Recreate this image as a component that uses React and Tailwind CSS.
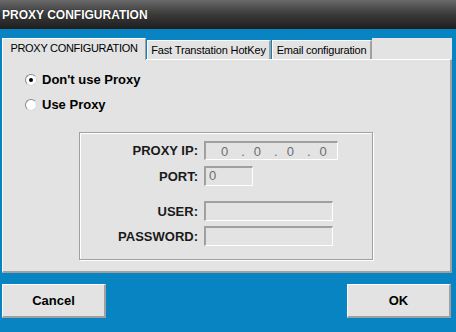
import React from "react";

function Radio({ checked, label }) {
    return (
        <div className="flex items-center h-[20px]">
            <div className="w-[12px] h-[12px] rounded-full bg-white border border-t-[#8a8a8a] border-l-[#8a8a8a] border-b-[#d8d8d8] border-r-[#d8d8d8] flex items-center justify-center">
                {checked && <div className="w-[4px] h-[4px] rounded-full bg-black" />}
            </div>
            <span className="ml-[5px] text-[13px] font-bold text-black">{label}</span>
        </div>
    );
}

function Field({ label, width, height, children, className }) {
    return (
        <div className={"flex items-center " + (className || "")}>
            <div className="w-[118px] text-right text-[13px] font-bold text-[#1a1a1a] leading-none">{label}</div>
            <div
                className={
                    "ml-[6px] bg-[#e3e3e3] border-t-2 border-l-2 border-[#a0a0a0] border-b border-r border-b-white border-r-white " +
                    width +
                    " " +
                    height
                }
            >
                {children}
            </div>
        </div>
    );
}

function App() {
    return (
        <div className="w-[456px] h-[332px] bg-[#0884c3] flex flex-col font-['Liberation_Sans',Arial,sans-serif]">
            {/* Title bar */}
            <div className="h-[29px] bg-gradient-to-b from-[#6a6a6a] via-[#3a3a3a] to-[#1e1e1e] flex items-center pl-[2px]">
                <span className="text-white text-[12px] font-bold [text-shadow:0_0_1px_#000]">PROXY CONFIGURATION</span>
            </div>

            <div className="mt-[9px] ml-[2px] w-[450px]">
                {/* Tabs */}
                <div className="flex items-end h-[21px]">
                    <div className="relative z-10 -mb-px h-[22px] w-[144px] bg-[#e3e3e3] border-l border-t border-white border-r border-r-[#a0a0a0] flex items-center justify-center pb-[2px]">
                        <span className="text-[11px] tracking-[-0.3px] text-black">PROXY CONFIGURATION</span>
                    </div>
                    <div className="h-[19px] w-[124px] ml-px bg-[#e3e3e3] border-l border-t border-white border-r-2 border-r-[#a0a0a0] flex items-center justify-center">
                        <span className="text-[11px] tracking-[-0.15px] text-black">Fast Transtation HotKey</span>
                    </div>
                    <div className="h-[19px] w-[100px] ml-px bg-[#e3e3e3] border-l border-t border-white border-r-2 border-r-[#a0a0a0] flex items-center justify-center">
                        <span className="text-[11px] tracking-[-0.2px] text-black">Email configuration</span>
                    </div>
                    <div className="flex-1 self-stretch bg-[#e3e3e3]" />
                </div>

                {/* Panel */}
                <div className="h-[214px] bg-[#e3e3e3] border-t border-l border-white border-r-2 border-b-2 border-r-[#a0a0a0] border-b-[#a0a0a0] flex flex-col">
                    <div className="pl-[22px] pt-[10px] flex flex-col gap-[5px]">
                        <Radio checked label="Don't use Proxy" />
                        <Radio label="Use Proxy" />
                    </div>

                    {/* Group box */}
                    <div className="ml-[76px] mt-[17px] w-[294px] h-[128px] border border-[#a0a0a0] shadow-[1px_1px_0_#fff,inset_1px_1px_0_#fff] pt-[8px]">
                        <Field label="PROXY IP:" width="w-[134px]" height="h-[19px]">
                            <div className="flex items-center h-full pl-[15px] text-[13px] text-[#6e6e6e] leading-none">
                                <span>0</span>
                                <span className="ml-[13px]">.</span>
                                <span className="ml-[9px]">0</span>
                                <span className="ml-[13px]">.</span>
                                <span className="ml-[9px]">0</span>
                                <span className="ml-[13px]">.</span>
                                <span className="ml-[9px]">0</span>
                            </div>
                        </Field>
                        <Field label="PORT:" width="w-[49px]" height="h-[20px]" className="mt-[6px]">
                            <div className="pl-[3px] pt-px text-[13px] text-[#6e6e6e] leading-none">0</div>
                        </Field>
                        <Field label="USER:" width="w-[129px]" height="h-[20px]" className="mt-[15px]" />
                        <Field label="PASSWORD:" width="w-[129px]" height="h-[20px]" className="mt-[5px]" />
                    </div>
                </div>
            </div>

            {/* Buttons */}
            <div className="mt-[11px] flex justify-between pl-[2px] pr-[5px]">
                <button className="w-[104px] h-[34px] bg-[#e3e3e3] border-t border-l border-white border-r-2 border-b-2 border-r-[#a0a0a0] border-b-[#a0a0a0] text-[13px] font-bold text-black">
                    Cancel
                </button>
                <button className="w-[104px] h-[34px] bg-[#e3e3e3] border-t border-l border-white border-r-2 border-b-2 border-r-[#a0a0a0] border-b-[#a0a0a0] text-[13px] font-bold text-black">
                    OK
                </button>
            </div>
        </div>
    );
}

export default App;
